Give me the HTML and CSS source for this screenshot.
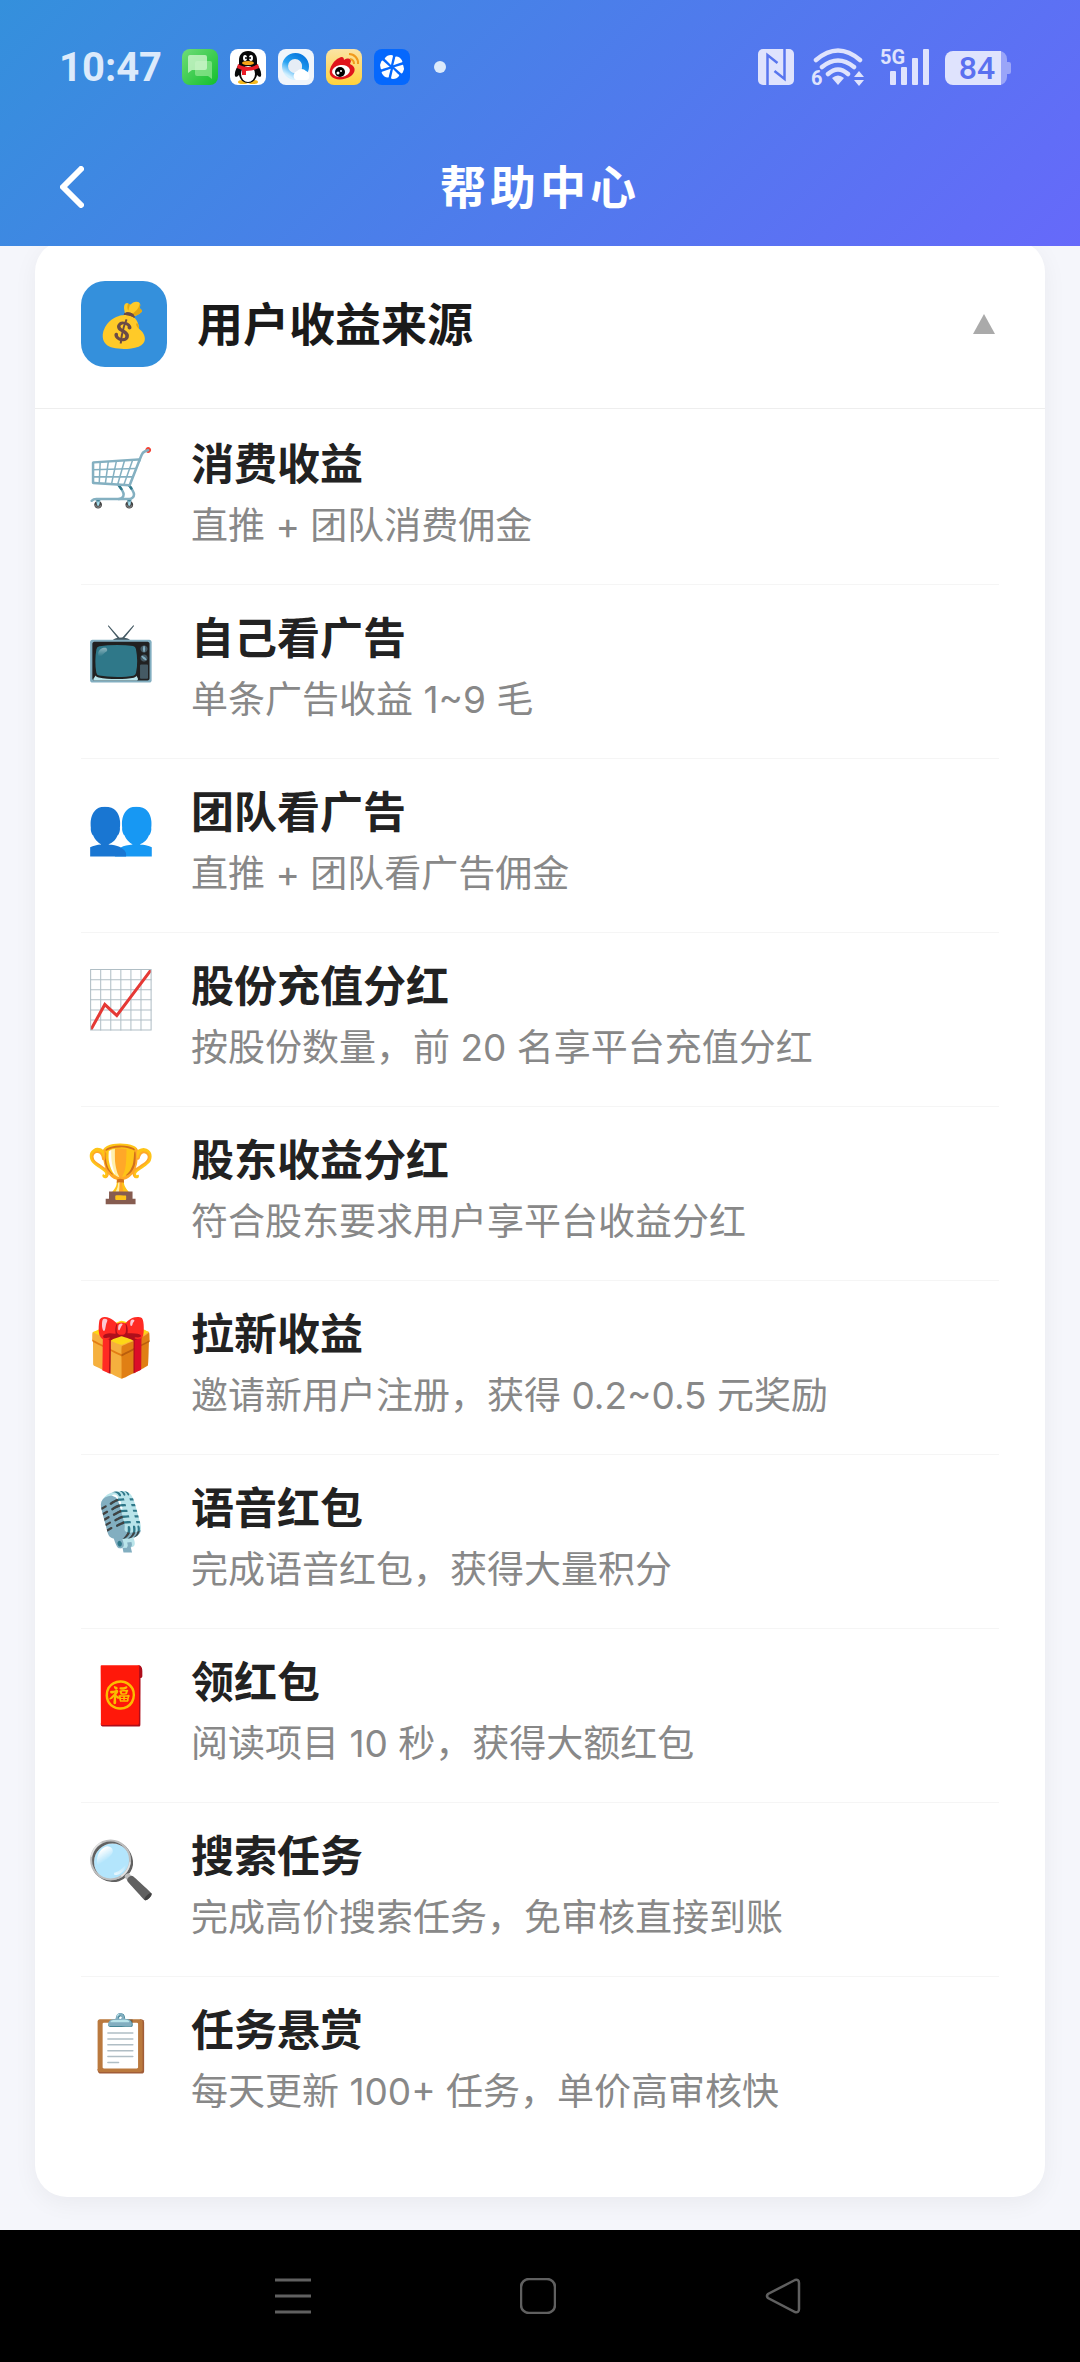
FILE: index.html
```html
<!DOCTYPE html>
<html lang="zh-CN">
<head>
	<meta charset="UTF-8">
	<meta name="viewport" content="width=device-width, initial-scale=1.0">
	<title>帮助中心</title>
	<link rel="stylesheet" href="styles.css">
</head>
<body>
	<header class="topo">
		<div class="status">
			<span class="hora">10:47</span>
			<div class="apps">
				<svg viewBox="0 0 36 36" width="36" height="36">
					<defs>
						<linearGradient id="verde" x1="0" y1="0" x2="1" y2="1"><stop offset="0" stop-color="#6fdc78"/><stop offset="1" stop-color="#12bf2c"/></linearGradient>
					</defs>
					<rect width="36" height="36" rx="8" fill="url(#verde)"/>
					<path d="M15 12h13a2 2 0 0 1 2 2v16l-4-3H15a2 2 0 0 1-2-2V14a2 2 0 0 1 2-2z" fill="#8fe690" opacity=".75"/>
					<path d="M8 6h15a2 2 0 0 1 2 2v11a2 2 0 0 1-2 2H10l-4 3V8a2 2 0 0 1 2-2z" fill="#d4f7d2" opacity=".75"/>
				</svg>
				<svg viewBox="0 0 36 36" width="36" height="36">
					<rect width="36" height="36" rx="8" fill="#fff"/>
					<ellipse cx="13" cy="33" rx="5" ry="2" fill="#f5b81c"/>
					<ellipse cx="23" cy="33" rx="5" ry="2" fill="#f5b81c"/>
					<path d="M18 2c-6 0-9 4-9 9v4c-2 3-5 8-4 12 1 2 3 0 4-1 1 5 5 8 9 8s8-3 9-8c1 1 3 3 4 1 1-4-2-9-4-12v-4c0-5-3-9-9-9z" fill="#090909"/>
					<ellipse cx="18" cy="25" rx="7" ry="8" fill="#fff"/>
					<ellipse cx="15" cy="9" rx="2" ry="3" fill="#fff"/><ellipse cx="21" cy="9" rx="2" ry="3" fill="#fff"/>
					<circle cx="16" cy="9" r="1" /><circle cx="20" cy="9" r="1"/>
					<ellipse cx="18" cy="14" rx="6" ry="2" fill="#f9a51a"/>
					<path d="M8 15c6 4 14 4 20 0l1 4c-4 2-8 3-13 3v4h-4v-5l-5-2z" fill="#ea1c27"/>
				</svg>
				<svg viewBox="0 0 36 36" width="36" height="36">
					<defs>
						<linearGradient id="azul" x1=".8" y1="0" x2=".2" y2="1"><stop offset="0" stop-color="#0a7be0"/><stop offset=".55" stop-color="#2aa4f2"/><stop offset="1" stop-color="#d5f1ff"/></linearGradient>
					</defs>
					<rect width="36" height="36" rx="8" fill="#f0f5fb"/>
					<circle cx="17.500" cy="17.500" r="10" fill="none" stroke="url(#azul)" stroke-width="7"/>
					<circle cx="17" cy="17" r="7" fill="#e6edf5"/>
					<path d="M18 31a5 5 0 0 1 1-9 6 6 0 0 1 9 0c4 1 5 9 0 9z" fill="#fff"/>
				</svg>
				<svg viewBox="0 0 36 36" width="36" height="36">
					<defs>
						<linearGradient id="amarelo" x1="0" y1="0" x2="0" y2="1"><stop offset="0" stop-color="#fbe3a4"/><stop offset="1" stop-color="#ffd23c"/></linearGradient>
					</defs>
					<rect width="36" height="36" rx="8" fill="url(#amarelo)"/>
					<path d="M13 9c3-2 5-1 5 2 3-2 7-2 7 1l-1 3c7 3 5 9 1 12-6 4-16 5-20 0-4-6 3-16 8-18z" fill="#e0141c"/>
					<ellipse cx="15" cy="22" rx="9" ry="6" fill="#fff" transform="rotate(-8 15 22)"/>
					<circle cx="14" cy="23" r="5"/>
					<circle cx="12" cy="24" r="1.500" fill="#fff"/><circle cx="15" cy="22" r="1" fill="#fff"/>
					<path d="M24 10a5 5 0 0 1 4 5M23 5a9 9 0 0 1 9 10" fill="none" stroke="#f19a1c" stroke-width="2"/>
				</svg>
				<svg viewBox="0 0 36 36" width="36" height="36">
					<rect width="36" height="36" rx="8" fill="#0568fd"/>
					<g fill="#fff">
						<path id="pa" d="M17 16l2-9q0-1-2-1-4 0-6 3-1 1 1 2z"/>
						<use href="#pa" transform="rotate(60 18 18)"/>
						<use href="#pa" transform="rotate(120 18 18)"/>
						<use href="#pa" transform="rotate(180 18 18)"/>
						<use href="#pa" transform="rotate(240 18 18)"/>
						<use href="#pa" transform="rotate(300 18 18)"/>
					</g>
				</svg>
			</div>
			<span class="ponto"></span>
			<div class="sinais">
				<svg viewBox="0 -8 36 54" width="36" height="54">
					<rect y="1" width="36" height="36" rx="5" fill="#dfe3fd"/>
					<path d="M9.500 37V7l10 8M26.500 1v30l-10-8" fill="none" stroke="#5875ee" stroke-width="2.500"/>
				</svg>
				<svg viewBox="-2 -8 56 54" width="56" height="54">
					<g fill="none" stroke="#dfe3fd" stroke-width="4.500" stroke-linecap="round">
						<path d="M5 12q22-19 44 0M11 19q16-13 32 0M17 26q10-9 20 0"/>
					</g>
					<path d="M21 30q6-5 12 0l-6 7z" fill="#dfe3fd"/>
					<path d="M43 29l5-6 5 6zM43 32h10l-5 6z" fill="#dfe3fd"/>
					<text x="0" y="37" class="mini">6</text>
				</svg>
				<svg viewBox="0 -8 50 54" width="50" height="54">
					<text x="0" y="16" class="mini">5G</text>
					<g fill="#dfe3fd">
						<rect x="10" y="23" width="6" height="14" rx="1"/>
						<rect x="21" y="19" width="6" height="18" rx="1"/>
						<rect x="32" y="10" width="6" height="27" rx="1"/>
						<rect x="43" y="1" width="6" height="36" rx="1"/>
					</g>
				</svg>
				<svg viewBox="0 -8 66 54" width="66" height="54">
					<path d="M8 3h46a8 8 0 0 1 8 8v3h2a2 2 0 0 1 2 2v8a2 2 0 0 1-2 2h-2v3a8 8 0 0 1-8 8H8z" fill="#9aa5f8"/>
					<path d="M8 3h48v34H8a8 8 0 0 1-8-8V11a8 8 0 0 1 8-8z" fill="#dfe3fd"/>
					<text x="32" y="31" text-anchor="middle" class="bateria">84</text>
				</svg>
			</div>
		</div>
		<div class="barra">
			<button type="button" class="voltar" aria-label="返回">
				<svg viewBox="0 0 24 42" width="24" height="42"><path d="M21 3L3 21l18 18" fill="none" stroke="#fff" stroke-width="6" stroke-linecap="round" stroke-linejoin="round"/></svg>
			</button>
			<h1>帮助中心</h1>
		</div>
	</header>
	<main class="principal">
		<section class="cartao">
			<button type="button" class="cartao-titulo" aria-expanded="true">
				<span class="moeda">💰</span>
				<span class="nome">用户收益来源</span>
				<svg viewBox="0 0 24 20" width="24" height="20"><path d="M12 0l11 20H1z" fill="#aaa"/></svg>
			</button>
			<ul class="lista">
				<li><span class="icone">🛒</span><div><h2>消费收益</h2><p>直推 + 团队消费佣金</p></div></li>
				<li><span class="icone">📺</span><div><h2>自己看广告</h2><p>单条广告收益 1~9 毛</p></div></li>
				<li><span class="icone">👥</span><div><h2>团队看广告</h2><p>直推 + 团队看广告佣金</p></div></li>
				<li><span class="icone">📈</span><div><h2>股份充值分红</h2><p>按股份数量，前 20 名享平台充值分红</p></div></li>
				<li><span class="icone">🏆</span><div><h2>股东收益分红</h2><p>符合股东要求用户享平台收益分红</p></div></li>
				<li><span class="icone">🎁</span><div><h2>拉新收益</h2><p>邀请新用户注册，获得 0.2~0.5 元奖励</p></div></li>
				<li><span class="icone">🎙️</span><div><h2>语音红包</h2><p>完成语音红包，获得大量积分</p></div></li>
				<li><span class="icone">🧧</span><div><h2>领红包</h2><p>阅读项目 10 秒，获得大额红包</p></div></li>
				<li><span class="icone">🔍</span><div><h2>搜索任务</h2><p>完成高价搜索任务，免审核直接到账</p></div></li>
				<li><span class="icone">📋</span><div><h2>任务悬赏</h2><p>每天更新 100+ 任务，单价高审核快</p></div></li>
			</ul>
		</section>
	</main>
	<nav class="navegacao">
		<button type="button" aria-label="最近任务">
			<svg viewBox="0 0 36 36" width="36" height="36"><path d="M0 2h36M0 18h36M0 34h36" stroke="#606060" stroke-width="3"/></svg>
		</button>
		<button type="button" aria-label="主页">
			<svg viewBox="0 0 36 36" width="36" height="36"><rect x="1" y="1" width="34" height="34" rx="8" fill="none" stroke="#606060" stroke-width="2.500"/></svg>
		</button>
		<button type="button" aria-label="返回">
			<svg viewBox="0 0 36 36" width="36" height="36"><path d="M30 2L3 16q-2 2 0 4l27 14q4 1 4-3V5q0-4-4-3z" fill="none" stroke="#606060" stroke-width="2.500"/></svg>
		</button>
	</nav>
</body>
</html>
```
FILE: styles.css
```css
* {
	margin: 0;
	padding: 0;
	box-sizing: border-box;
}
body {
	background-color: #f5f6fb;
	font-family: Inter, "Noto Sans CJK SC", sans-serif;
	min-height: 100vh;
	display: flex;
	flex-direction: column;
}
button {
	background: none;
	border: none;
	font-family: inherit;
	cursor: pointer;
}
svg {
	display: block;
}
.topo {
	background: linear-gradient(135deg, #3490dc, #6669fa);
	position: relative;
	padding-top: 40px;
}
.status {
	display: flex;
	align-items: center;
	height: 54px;
	padding: 0 69px 0 59px;
}
.hora {
	font-family: Roboto, sans-serif;
	font-size: 40px;
	font-weight: bold;
	color: #dceafb;
	width: 123px;
}
.apps {
	display: flex;
	gap: 12px;
}
.ponto {
	width: 12px;
	height: 12px;
	border-radius: 50%;
	background-color: #dceafb;
	margin-left: 24px;
}
.sinais {
	display: flex;
	align-items: center;
	gap: 15px;
	margin-left: auto;
}
.mini {
	font-family: Roboto, sans-serif;
	font-size: 20px;
	font-weight: bold;
	fill: #dfe3fd;
}
.bateria {
	font-family: Roboto, sans-serif;
	font-size: 32px;
	font-weight: 500;
	fill: #5a70f0;
}
.barra {
	display: grid;
	grid-template-columns: 84px 1fr 84px;
	align-items: center;
	height: 152px;
	padding-top: 34px;
}
.voltar {
	padding: 20px 0 20px 60px;
}
.barra h1 {
	font-size: 46px;
	line-height: 60px;
	font-weight: bold;
	letter-spacing: 4px;
	color: white;
	text-align: center;
}
.principal {
	flex: 1;
	padding: 0 35px 33px;
	margin-top: -6px;
}
.cartao {
	background-color: white;
	border-radius: 32px;
	box-shadow: 0 6px 24px rgba(0,0,0,0.05);
	padding-bottom: 47px;
}
.cartao-titulo {
	display: flex;
	align-items: center;
	gap: 30px;
	width: 100%;
	padding: 41px 49px 41px 46px;
	border-bottom: solid 1px #eee;
	text-align: left;
}
.moeda {
	width: 86px;
	height: 86px;
	border-radius: 24px;
	background-color: #3490dc;
	font-size: 43px;
	line-height: 86px;
	text-align: center;
}
.nome {
	flex: 1;
	font-size: 46px;
	line-height: 60px;
	font-weight: bold;
	color: #1a1a1a;
}
.lista {
	list-style: none;
	padding: 2px 46px 0;
}
.lista li {
	display: flex;
	gap: 30px;
	padding: 24px 0 33px;
	border-bottom: solid 1px #f5f5f5;
}
.lista li:last-child {
	border-bottom: none;
}
.icone {
	width: 80px;
	font-size: 56px;
	line-height: 84px;
	height: 84px;
	display: flex;
	justify-content: center;
}
.lista h2 {
	font-size: 43px;
	line-height: 58px;
	font-weight: 600;
	color: #222;
	margin-bottom: 8px;
}
.lista p {
	font-size: 37px;
	line-height: 50px;
	color: #888;
}
.navegacao {
	background-color: black;
	display: flex;
	justify-content: center;
	align-items: center;
	gap: 209px;
	height: 132px;
	padding-right: 4px;
}
```
